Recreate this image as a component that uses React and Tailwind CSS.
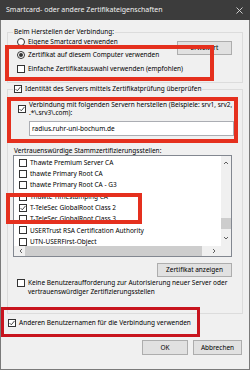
import React from "react";

const Check = ({ checked }) => (
  <span className="flex h-[8px] w-[8px] shrink-0 items-center justify-center border border-[#333333] bg-white">
    {checked && (
      <svg width="6" height="6" viewBox="0 0 6 6">
        <path d="M0.6 3.1 L2.3 4.8 L5.5 0.9" fill="none" stroke="#333333" strokeWidth="0.9" />
      </svg>
    )}
  </span>
);

const Radio = ({ checked }) => (
  <span className="flex h-[8px] w-[8px] shrink-0 items-center justify-center rounded-full border border-[#333333] bg-white">
    {checked && <span className="h-[4px] w-[4px] rounded-full bg-[#333333]" />}
  </span>
);

const Button = ({ children, className }) => (
  <div className={`flex items-center justify-center border border-[#adadad] bg-[#e1e1e1] ${className}`}>
    {children}
  </div>
);

const Chevron = ({ dir }) => {
  const d = {
    up: "M1 4 L3 2 L5 4",
    down: "M1 2 L3 4 L5 2",
    left: "M4 1 L2 3 L4 5",
    right: "M2 1 L4 3 L2 5",
  }[dir];
  return (
    <svg width="6" height="6" viewBox="0 0 6 6">
      <path d={d} fill="none" stroke="#606060" strokeWidth="1" />
    </svg>
  );
};

const certs = [
  ["Thawte Premium Server CA", false],
  ["thawte Primary Root CA", false],
  ["thawte Primary Root CA - G3", false],
  ["Thawte Timestamping CA", false],
  ["T-TeleSec GlobalRoot Class 2", true],
  ["T-TeleSec GlobalRoot Class 3", false],
  ["USERTrust RSA Certification Authority", false],
  ["UTN-USERFirst-Object", false],
];

export default function App() {
  return (
    <div className="relative flex h-[370px] w-[250px] flex-col overflow-hidden whitespace-nowrap bg-[#f0f0f0] font-['Noto_Sans',sans-serif] text-[6.5px] text-black">
      {/* title bar */}
      <div className="flex h-[20px] shrink-0 items-center justify-between bg-[#3c3c3c] pl-[6px] pr-[7px] text-[7px] text-[#f2f2f2]">
        <span>Smartcard- oder andere Zertifikateigenschaften</span>
        <svg width="7" height="7" viewBox="0 0 7 7">
          <path d="M0.5 0.5 L6.5 6.5 M6.5 0.5 L0.5 6.5" stroke="#dddddd" strokeWidth="0.9" />
        </svg>
      </div>

      <div className="flex flex-1 flex-col border-x border-b border-[#7a7a7a]">
        {/* group 1 */}
        <fieldset className="mx-[6px] mt-[8px] border border-[#dcdcdc] pb-[6px]">
          <legend className="ml-[5px] px-[1px] leading-[8px]">Beim Herstellen der Verbindung:</legend>
          <div className="flex justify-between pl-[9px] pr-[10px]">
            <div className="flex flex-col">
              <div className="flex h-[12px] items-center gap-[3px]">
                <Radio />
                <span>Eigene Smartcard verwenden</span>
              </div>
              <div className="flex h-[14px] items-center gap-[3px]">
                <Radio checked />
                <span>Zertifikat auf diesem Computer verwenden</span>
              </div>
            </div>
            <Button className="mt-[5px] h-[14px] w-[55px]">Erweitert</Button>
          </div>
          <div className="flex h-[14px] items-center gap-[3px] pl-[9px]">
            <Check />
            <span>Einfache Zertifikatauswahl verwenden (empfohlen)</span>
          </div>
        </fieldset>

        {/* group 2 */}
        <fieldset className="mx-[6px] mt-[1px] border border-[#dcdcdc] pb-[17px]">
          <legend className="ml-[5px] flex items-center gap-[3px] px-[1px] leading-[10px]">
            <Check checked />
            <span>Identität des Servers mittels Zertifikatprüfung überprüfen</span>
          </legend>

          <div className="mt-[7px] flex items-center gap-[3px] pl-[10px]">
            <Check checked />
            <span className="leading-[8px]">
              Verbindung mit folgenden Servern herstellen (Beispiele: srv1, srv2,
              <br />
              .*\.srv3\.com):
            </span>
          </div>

          <div className="ml-[21px] mt-[4px] flex h-[15px] w-[205px] items-center border border-[#abadb3] bg-white pl-[2px]">
            radius.ruhr-uni-bochum.de
          </div>

          <div className="ml-[6px] mt-[11px] leading-[8px]">Vertrauenswürdige Stammzertifizierungsstellen:</div>

          <div className="ml-[5px] flex h-[102px] w-[219px] flex-col border border-[#828790] bg-white">
            <div className="flex flex-1 overflow-hidden">
              <div className="flex flex-1 flex-col overflow-hidden pl-[5px] pt-[1px]">
                {certs.map(([name, checked]) => (
                  <div key={name} className="flex h-[11.3px] shrink-0 items-center gap-[3px]">
                    <Check checked={checked} />
                    <span>{name}</span>
                  </div>
                ))}
              </div>
              <div className="flex w-[10px] flex-col items-center bg-[#f0f0f0]">
                <div className="mt-[4px]">
                  <Chevron dir="up" />
                </div>
                <div className="mt-[52px] h-[11px] w-full bg-[#cdcdcd]" />
                <div className="mt-[6px]">
                  <Chevron dir="down" />
                </div>
              </div>
            </div>
            <div className="flex h-[10px] items-center bg-[#f0f0f0]">
              <div className="ml-[4px]">
                <Chevron dir="left" />
              </div>
              <div className="ml-[1px] h-full w-[177px] bg-[#cdcdcd]" />
              <div className="ml-[9px]">
                <Chevron dir="right" />
              </div>
            </div>
          </div>

          <div className="mt-[6px] flex justify-end pr-[10px]">
            <Button className="h-[14px] w-[75px]">Zertifikat anzeigen</Button>
          </div>

          <div className="mt-[1px] flex items-start gap-[3px] pl-[9px]">
            <span className="mt-[1px]">
              <Check />
            </span>
            <span className="leading-[9px]">
              Keine Benutzeraufforderung zur Autorisierung neuer Server oder
              <br />
              vertrauenswürdiger Zertifizierungsstellen
            </span>
          </div>
        </fieldset>

        <div className="ml-[7px] mt-[4px] flex h-[10px] items-center gap-[3px]">
          <Check checked />
          <span>Anderen Benutzernamen für die Verbindung verwenden</span>
        </div>

        <div className="mr-[7px] mt-[12px] flex justify-end gap-[5px]">
          <Button className="h-[15px] w-[46px] border-[#0078d7]">OK</Button>
          <Button className="h-[15px] w-[49px]">Abbrechen</Button>
        </div>
      </div>

      {/* annotation boxes */}
      <div className="absolute left-[5px] top-[45px] h-[36px] w-[209px] border-[4px] border-[#e5301e]" />
      <div className="absolute left-[7px] top-[97px] h-[46px] w-[231px] border-[4px] border-[#e5301e]" />
      <div className="absolute left-[6px] top-[193px] h-[31px] w-[136px] border-[4px] border-[#e5301e]" />
      <div className="absolute left-[1px] top-[307px] h-[30px] w-[199px] border-[3px] border-[#c8141e]" />
    </div>
  );
}
